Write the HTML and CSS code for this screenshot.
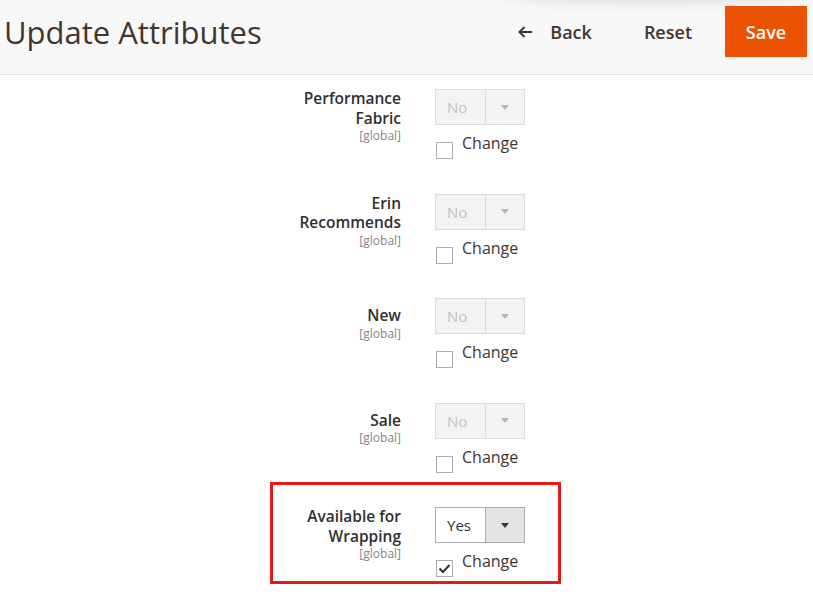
FILE: index.html
```html
<!DOCTYPE html>
<html>
<head>
<meta charset="utf-8">
<link rel="stylesheet" href="styles.css">
</head>
<body>
<header class="page-header">
  <h1 class="title">Update Attributes</h1>
  <div class="actions">
    <button class="btn btn-back"><svg class="arrow" width="15" height="12" viewBox="0 0 15 12"><path d="M6.5 1 L1.5 6 L6.5 11 M1.5 6 H14" fill="none" stroke="#41362f" stroke-width="2"/></svg>Back</button>
    <button class="btn btn-reset">Reset</button>
    <button class="btn btn-save">Save</button>
  </div>
</header>
<main class="form">
  <div class="row">
    <div class="label"><span class="name">Performance Fabric</span><span class="scope">[global]</span></div>
    <div class="control">
      <div class="select disabled"><span class="val">No</span><span class="arrowbox"><span class="tri"></span></span></div>
      <label class="change"><span class="cb"></span><span class="ctext">Change</span></label>
    </div>
  </div>
  <div class="row">
    <div class="label"><span class="name">Erin Recommends</span><span class="scope">[global]</span></div>
    <div class="control">
      <div class="select disabled"><span class="val">No</span><span class="arrowbox"><span class="tri"></span></span></div>
      <label class="change"><span class="cb"></span><span class="ctext">Change</span></label>
    </div>
  </div>
  <div class="row">
    <div class="label single"><span class="name">New</span><span class="scope">[global]</span></div>
    <div class="control">
      <div class="select disabled"><span class="val">No</span><span class="arrowbox"><span class="tri"></span></span></div>
      <label class="change"><span class="cb"></span><span class="ctext">Change</span></label>
    </div>
  </div>
  <div class="row">
    <div class="label single"><span class="name">Sale</span><span class="scope">[global]</span></div>
    <div class="control">
      <div class="select disabled"><span class="val">No</span><span class="arrowbox"><span class="tri"></span></span></div>
      <label class="change"><span class="cb"></span><span class="ctext">Change</span></label>
    </div>
  </div>
  <div class="row highlight">
    <div class="label"><span class="name">Available for Wrapping</span><span class="scope">[global]</span></div>
    <div class="control">
      <div class="select"><span class="val">Yes</span><span class="arrowbox"><span class="tri"></span></span></div>
      <label class="change"><span class="cb checked"><svg width="13" height="11" viewBox="0 0 13 11"><path d="M1.5 5.5 L5 9 L11.5 2" fill="none" stroke="#333" stroke-width="2"/></svg></span><span class="ctext">Change</span></label>
    </div>
  </div>
</main>
</body>
</html>
```
FILE: styles.css
```css
*, *::before, *::after { box-sizing: border-box; }
html, body { margin: 0; padding: 0; background: #fff; }
body { font-family: "Open Sans", "Liberation Sans", sans-serif; color: #303030; width: 813px; height: 601px; overflow: hidden; }

.page-header {
  height: 75px;
  background: #f8f8f8;
  border-bottom: 1px solid #e3e3e3;
  display: flex;
  align-items: flex-start;
  justify-content: space-between;
  padding: 0 6px 0 4px;
  position: relative;
}
.page-header::before {
  content: "";
  position: absolute;
  left: 500px; top: -20px; width: 300px; height: 20px;
  box-shadow: 0 2px 14px rgba(0,0,0,0.12);
  border-radius: 50%;
}
.title {
  margin: 11px 0 0 0;
  font-weight: 400;
  font-size: 31px;
  line-height: 42px;
  color: #41362f;
}
.actions { display: flex; align-items: center; margin-top: 6px; }
.btn {
  font-family: inherit;
  border: 0;
  background: transparent;
  font-size: 18px;
  font-weight: 600;
  color: #41362f;
  height: 51px;
  padding: 0;
  display: flex;
  align-items: center;
  cursor: pointer;
}
.btn-back { margin-right: 52px; }
.arrow { margin-right: 17px; }
.btn-reset { margin-right: 33px; }
.btn-save {
  background: #eb5202;
  color: #fff;
  width: 82px;
  justify-content: center;
  position: relative;
}

.form { padding-top: 14px; }
.row {
  display: flex;
  height: 104.5px;
  width: 291px;
  margin-left: 270px;
}
.label {
  width: 131px;
  display: flex;
  flex-direction: column;
  align-items: flex-end;
  text-align: right;
  margin-top: 0;
}
.label.single { padding-top: 8px; }
.name {
  font-size: 15.5px;
  font-weight: 600;
  line-height: 19.5px;
  color: #303030;
  width: 112px;
}
.scope { font-size: 12px; line-height: 13px; color: #858585; margin-top: 1px; }
.control { margin-left: 34px; }
.select {
  width: 90px;
  height: 36px;
  border: 1px solid #adadad;
  display: flex;
  background: #fff;
}
.select .val { flex: 0 0 49px; font-size: 15px; line-height: 34px; padding-left: 11px; color: #303030; }
.select .arrowbox { flex: 1; background: #e3e3e3; border-left: 1px solid #adadad; display: flex; align-items: center; justify-content: center; }
.tri { width: 0; height: 0; border-left: 4.5px solid transparent; border-right: 4.5px solid transparent; border-top: 5px solid #41362f; }
.select.disabled { border-color: #dcdcdc; background: #f3f3f3; }
.select.disabled .val { color: #c2c2c2; }
.select.disabled .arrowbox { background: #f3f3f3; border-left-color: #dcdcdc; }
.select.disabled .tri { border-top-color: #b5b5b5; border-left-width: 4px; border-right-width: 4px; border-top-width: 5px; }

.change { display: flex; align-items: flex-start; margin-top: 17px; margin-left: 1px; }
.cb { width: 17px; height: 17px; border: 1px solid #adadad; background: #fff; display: flex; align-items: center; justify-content: center; }
.ctext { font-size: 16px; line-height: 18px; color: #41362f; margin-left: 9px; margin-top: -8px; }

.highlight { position: relative; }
.highlight::before {
  content: "";
  position: absolute;
  left: 0; top: -25px; width: 291px; height: 102px;
  border: 3px solid #e31a1a;
  pointer-events: none;
}
```
